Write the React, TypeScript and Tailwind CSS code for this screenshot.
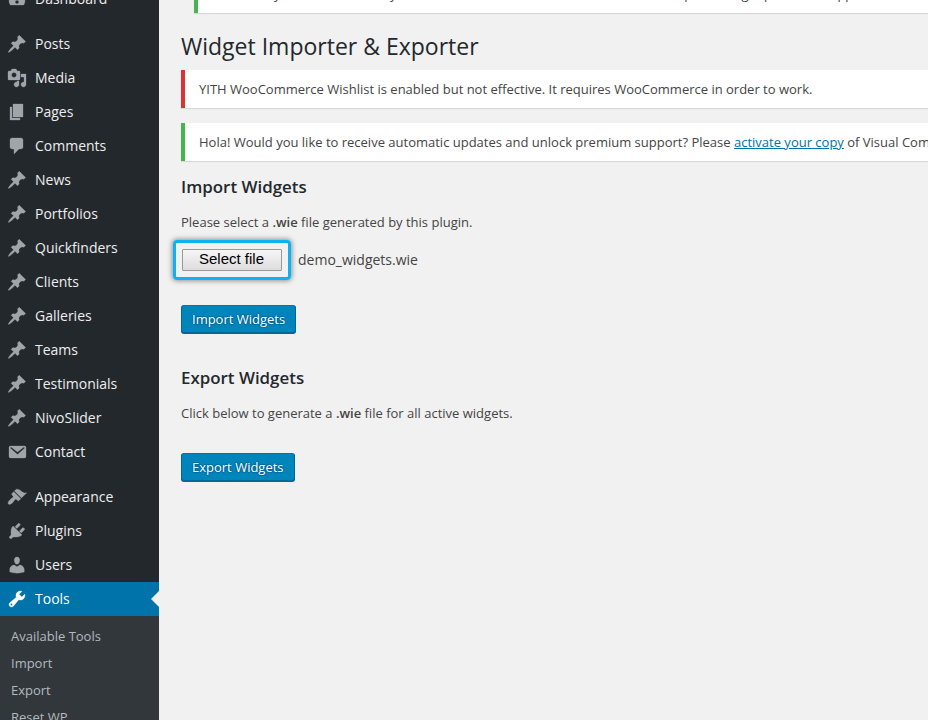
import React from "react";

const icons = {
  dashboard:
    "M3.4 16h13.2c1-1.3 1.4-2.9 1.4-4.8 0-4.42-3.58-8.2-8-8.2s-8 3.78-8 8.2c0 1.9.4 3.5 1.4 4.8zM10 4c.55 0 1 .45 1 1s-.45 1-1 1-1-.45-1-1 .45-1 1-1zM5 9c.55 0 1 .45 1 1s-.45 1-1 1-1-.45-1-1 .45-1 1-1zm10 0c.55 0 1 .45 1 1s-.45 1-1 1-1-.45-1-1 .45-1 1-1zm-5 2.2c1 0 1.8.8 1.8 1.8s-.8 1.8-1.8 1.8-1.8-.8-1.8-1.8.8-1.8 1.8-1.8z",
  post: "M10.44 3.02l1.82-1.82 6.36 6.35-1.83 1.82c-1.05-.68-2.48-.57-3.41.36l-.75.75c-.92.93-1.04 2.35-.35 3.41l-1.83 1.82-2.41-2.41-2.8 2.79c-.42.42-3.38 2.71-3.8 2.29s1.86-3.39 2.28-3.81l2.79-2.79L4.1 9.36l1.83-1.82c1.05.69 2.48.57 3.4-.36l.75-.75c.93-.92 1.05-2.35.36-3.41z",
  media:
    "M13 11V4c0-.55-.45-1-1-1h-1.67L9 1H5L3.67 3H2c-.55 0-1 .45-1 1v7c0 .55.45 1 1 1h10c.55 0 1-.45 1-1zM7 4.5c1.38 0 2.5 1.12 2.5 2.5S8.38 9.5 7 9.5 4.5 8.38 4.5 7 5.62 4.5 7 4.5zM14 6h5v10.5c0 1.38-1.12 2.5-2.5 2.5S14 17.88 14 16.5s1.12-2.5 2.5-2.5c.17 0 .34.02.5.05V9h-3V6zm-4 8.05V13h2v3.5c0 1.38-1.12 2.5-2.5 2.5S7 17.88 7 16.5 8.12 14 9.5 14c.17 0 .34.02.5.05z",
  page: "M6 15V2h10v13H6zm-1 1h8v2H3V5h2v11z",
  comments:
    "M5 2h9c1.1 0 2 .9 2 2v7c0 1.1-.9 2-2 2h-2l-5 5v-5H5c-1.1 0-2-.9-2-2V4c0-1.1.9-2 2-2z",
  mail: "M3.5 4h14c.83 0 1.5.67 1.5 1.5v9c0 .83-.67 1.5-1.5 1.5h-14c-.83 0-1.5-.67-1.5-1.5v-9C2 4.67 2.67 4 3.5 4zM3.6 5.4c-.4.4-.2.9.1 1.2l6.8 6 6.8-6c.3-.3.5-.8.1-1.2s-.8-.2-1.1 0l-5.8 4.7-5.8-4.7c-.3-.2-.7-.4-1.1 0z",
  appearance:
    "M14.48 11.06L7.41 3.99l1.5-1.5c.5-.56 2.3-.47 3.51.32 1.21.8 1.43 1.28 2.91 2.1 1.18.64 2.45 1.26 4.45.85zm-.71.71L6.7 4.7 4.93 6.47c-.39.39-.39 1.02 0 1.41l1.06 1.06c.39.39.39 1.03 0 1.42-.6.6-1.43 1.11-2.21 1.69-.35.26-.7.53-1.01.84C1.43 14.23.4 16.08 1.4 17.07c.99 1 2.84-.03 4.18-1.36.31-.31.58-.66.85-1.02.57-.78 1.08-1.61 1.69-2.21.39-.39 1.02-.39 1.41 0l1.06 1.06c.39.39 1.02.39 1.41 0z",
  plugins:
    "M13.11 4.36L9.87 7.6 8 5.73l3.24-3.24c.35-.34 1.05-.2 1.56.32.52.51.66 1.21.31 1.55zm-8 1.77l.91-1.12 9.01 9.01-1.19.84c-.71.71-2.63 1.16-3.82 1.16H6.14L4.9 17.26c-.59.59-1.54.59-2.12 0-.59-.58-.59-1.53 0-2.12l1.24-1.24v-3.88c0-1.13.4-3.19 1.09-3.89zm7.26 3.97l3.24-3.24c.34-.35 1.04-.21 1.55.31.52.51.66 1.21.31 1.55l-3.24 3.25z",
  users:
    "M10 9.25c-2.27 0-2.73-3.44-2.73-3.44C7 4.02 7.82 2 9.97 2c2.16 0 2.98 2.02 2.71 3.81 0 0-.41 3.44-2.68 3.44zm0 2.57L12.72 10c2.39 0 4.52 2.33 4.52 4.53v2.49s-3.65 1.13-7.24 1.13c-3.65 0-7.24-1.13-7.24-1.13v-2.49c0-2.25 1.94-4.48 4.47-4.48z",
  tools:
    "M16.68 9.77c-1.34 1.34-3.3 1.67-4.95.99l-5.41 6.52c-.99.99-2.59.99-3.58 0s-.99-2.59 0-3.57l6.52-5.42c-.68-1.65-.35-3.61.99-4.95 1.28-1.28 3.12-1.62 4.72-1.06l-2.89 2.89 2.82 2.82 2.86-2.87c.53 1.58.18 3.39-1.08 4.65zM3.81 16.21c.4.39 1.04.39 1.43 0 .4-.4.4-1.04 0-1.43-.39-.4-1.03-.4-1.43 0-.39.39-.39 1.03 0 1.43z",
};

type IconName = keyof typeof icons;
type Entry = { label: string; icon: IconName };

const contentEntries: Entry[] = [
  { label: "Posts", icon: "post" },
  { label: "Media", icon: "media" },
  { label: "Pages", icon: "page" },
  { label: "Comments", icon: "comments" },
  { label: "News", icon: "post" },
  { label: "Portfolios", icon: "post" },
  { label: "Quickfinders", icon: "post" },
  { label: "Clients", icon: "post" },
  { label: "Galleries", icon: "post" },
  { label: "Teams", icon: "post" },
  { label: "Testimonials", icon: "post" },
  { label: "NivoSlider", icon: "post" },
  { label: "Contact", icon: "mail" },
];

const adminEntries: Entry[] = [
  { label: "Appearance", icon: "appearance" },
  { label: "Plugins", icon: "plugins" },
  { label: "Users", icon: "users" },
];

const toolsLinks = ["Available Tools", "Import", "Export", "Reset WP"];

function MenuItem({ label, icon, active = false }: Entry & { active?: boolean }) {
  return (
    <a
      className={
        active
          ? "relative flex h-[34px] shrink-0 items-center gap-2 bg-[#0073aa] pl-[7px] text-white"
          : "flex h-[34px] shrink-0 items-center gap-2 pl-[7px] text-[#eeeeee]"
      }
    >
      <svg
        viewBox="0 0 20 20"
        className={
          active
            ? "size-5 fill-white stroke-white stroke-[0.3]"
            : "size-5 fill-[#a0a5aa] stroke-[#a0a5aa] stroke-[0.3]"
        }
        fillRule="evenodd"
      >
        <path d={icons[icon]} />
      </svg>
      <span className="text-sm leading-[18px]">{label}</span>
      {active && (
        <span className="absolute top-[9px] right-0 border-y-8 border-r-8 border-y-transparent border-r-[#f1f1f1]" />
      )}
    </a>
  );
}

function Notice({
  tone,
  children,
}: {
  tone: "error" | "success";
  children: React.ReactNode;
}) {
  return (
    <div
      className={
        (tone === "error" ? "border-[#dc3232] " : "border-[#46b450] ") +
        "h-[38px] overflow-visible border-l-4 bg-white pl-[14px] leading-[38px] whitespace-nowrap shadow-[0_1px_1px_0_rgba(0,0,0,0.1)]"
      }
    >
      {children}
    </div>
  );
}

function PrimaryButton({ children }: { children: React.ReactNode }) {
  return (
    <button className="block h-7 rounded-[3px] border border-[#006799] border-t-[#0073aa] bg-[#0085ba] px-[10px] pb-px text-[13px] leading-[26px] text-white shadow-[0_1px_0_#006799] [text-shadow:0_-1px_1px_#006799,1px_0_1px_#006799,0_1px_1px_#006799,-1px_0_1px_#006799]">
      {children}
    </button>
  );
}

export default function App() {
  return (
    <div className="flex h-[720px] w-[928px] overflow-hidden bg-[#f1f1f1] font-['Open_Sans',sans-serif] text-[13px] text-[#444444]">
      <nav className="flex w-[159px] shrink-0 flex-col overflow-hidden bg-[#23282d]">
        <div className="-mt-[18px] mb-[11px]">
          <MenuItem label="Dashboard" icon="dashboard" />
        </div>
        {contentEntries.map((e) => (
          <MenuItem key={e.label} {...e} />
        ))}
        <div className="h-[11px] shrink-0" />
        {adminEntries.map((e) => (
          <MenuItem key={e.label} {...e} />
        ))}
        <MenuItem label="Tools" icon="tools" active />
        <div className="flex shrink-0 flex-col bg-[#32373c] pt-[7px] pl-[11px] text-[#b4b9be]">
          {toolsLinks.map((l) => (
            <a key={l} className="h-[27px] leading-[27px]">
              {l}
            </a>
          ))}
        </div>
      </nav>

      <main className="min-w-0 flex-1 overflow-hidden pl-[22px]">
        <div className="-mt-[25px] ml-[13px]">
          <Notice tone="success">
            Hi! Would you like to activate your version of Revolution Slider to receive live updates
            &amp; get premium support? This is optional
          </Notice>
        </div>
        <h1 className="mt-[19px] mb-[9px] text-[23px] leading-[29px] text-[#23282d]">
          Widget Importer &amp; Exporter
        </h1>
        <Notice tone="error">
          YITH WooCommerce Wishlist is enabled but not effective. It requires WooCommerce in order
          to work.
        </Notice>
        <div className="mt-[15px]">
          <Notice tone="success">
            Hola! Would you like to receive automatic updates and unlock premium support? Please{" "}
            <a className="text-[#0073aa] underline">activate your copy</a> of Visual Composer.
          </Notice>
        </div>

        <h2 className="mt-[15px] text-[16.9px] leading-[22px] font-semibold text-[#23282d]">
          Import Widgets
        </h2>
        <p className="mt-[14px] leading-5">
          Please select a <strong className="font-semibold">.wie</strong> file generated by this
          plugin.
        </p>
        <div className="mt-2 -ml-2 flex items-center">
          <div className="flex h-10 w-[118px] items-center justify-center rounded-[4px] border-3 border-[#0fb1f2] shadow-[0_0_5px_1px_rgba(0,0,0,0.4)]">
            <button className="h-[22px] w-[100px] rounded-[1px] border border-[#9a9a9a] bg-linear-to-b from-[#f6f6f6] to-[#dddddd] pr-px pb-[2px] font-['Liberation_Sans',sans-serif] text-[15px] leading-[18px] text-black">
              Select file
            </button>
          </div>
          <span className="ml-[7px] text-sm">demo_widgets.wie</span>
        </div>
        <div className="mt-[25px]">
          <PrimaryButton>Import Widgets</PrimaryButton>
        </div>

        <h2 className="mt-[34px] text-[16.9px] leading-[22px] font-semibold text-[#23282d]">
          Export Widgets
        </h2>
        <p className="mt-[14px] leading-5">
          Click below to generate a <strong className="font-semibold">.wie</strong> file for all
          active widgets.
        </p>
        <div className="mt-[30px]">
          <PrimaryButton>Export Widgets</PrimaryButton>
        </div>
      </main>
    </div>
  );
}
